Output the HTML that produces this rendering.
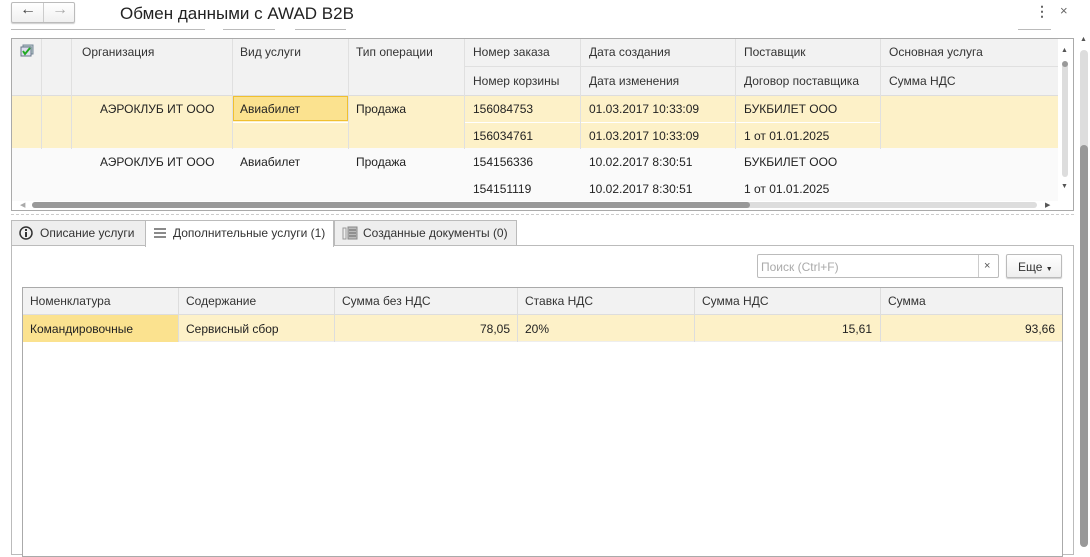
<!DOCTYPE html>
<html><head><meta charset="utf-8"><style>
*{box-sizing:border-box;margin:0;padding:0}
body{width:1090px;height:547px;background:#fff;font-family:"Liberation Sans",Arial,sans-serif;font-size:12px;color:#333;position:relative;overflow:hidden}
.a{position:absolute}
.t{position:absolute;white-space:nowrap;line-height:14px}
.hc{background:#f2f2f2}
</style></head><body>
<!-- nav buttons -->
<div class="a" style="left:11px;top:2px;width:64px;height:21px;border:1px solid #bbb;border-radius:2px;background:linear-gradient(#fff,#f0f0f0);box-shadow:0 1px 1px #ccc"></div>
<div class="a" style="left:43px;top:3px;width:1px;height:19px;background:#ccc"></div>
<div class="t" style="left:20px;top:3px;font-size:16px;color:#444">&#8592;</div>
<div class="t" style="left:52px;top:3px;font-size:16px;color:#aaa">&#8594;</div>
<div class="t" style="left:120px;top:4px;font-size:17px;line-height:20px;color:#222">Обмен данными с AWAD B2B</div>
<div class="a" style="left:11px;top:29px;width:194px;height:1px;background:#bbb"></div>
<div class="a" style="left:223px;top:29px;width:52px;height:1px;background:#bbb"></div>
<div class="a" style="left:295px;top:29px;width:51px;height:1px;background:#bbb"></div>
<div class="a" style="left:1018px;top:29px;width:33px;height:1px;background:#bbb"></div>
<div class="t" style="left:1035px;top:4px;font-size:14px;color:#666;font-weight:bold">&#8942;</div>
<div class="t" style="left:1060px;top:4px;font-size:13px;color:#666">×</div>

<!-- top table -->
<div class="a" style="left:11px;top:38px;width:1063px;height:173px;border:1px solid #aaa;background:#fff"></div>
<div class="a hc" style="left:12px;top:39px;width:1046px;height:56px"></div>
<div class="a" style="left:12px;top:95px;width:1046px;height:53px;background:#fdf1c8"></div>
<div class="a" style="left:12px;top:148px;width:1046px;height:53px;background:#fafafa"></div>
<div class="a" style="left:233px;top:96px;width:115px;height:25px;background:#fbe28f;border:1px solid #f0c030"></div>
<!-- horizontal sub-lines -->
<div class="a" style="left:464px;top:66px;width:594px;height:1px;background:#e0e0e0"></div>
<div class="a" style="left:464px;top:122px;width:416px;height:1px;background:#fff"></div>
<div class="a" style="left:233px;top:122px;width:115px;height:1px;background:#fff"></div>
<div class="a" style="left:12px;top:95px;width:1046px;height:1px;background:#ddd"></div>
<!-- vertical lines -->
<div class="a" style="left:41px;top:39px;width:1px;height:110px;background:#fff;border-left:1px solid #e0e0e0"></div>
<div class="a" style="left:71px;top:39px;width:1px;height:110px;background:#e0e0e0"></div>
<div class="a" style="left:232px;top:39px;width:1px;height:110px;background:#e0e0e0"></div>
<div class="a" style="left:348px;top:39px;width:1px;height:110px;background:#e0e0e0"></div>
<div class="a" style="left:464px;top:39px;width:1px;height:110px;background:#e0e0e0"></div>
<div class="a" style="left:580px;top:39px;width:1px;height:110px;background:#e0e0e0"></div>
<div class="a" style="left:735px;top:39px;width:1px;height:110px;background:#e0e0e0"></div>
<div class="a" style="left:880px;top:39px;width:1px;height:110px;background:#e0e0e0"></div>
<!-- check icon -->
<svg class="a" style="left:20px;top:44px" width="14" height="13"><rect x="3" y="1" width="10" height="9" fill="#bcc" stroke="#789"/><rect x="1" y="3" width="10" height="9" fill="#dde" stroke="#678"/><path d="M3 7l2 3 5-6" stroke="#2a2" stroke-width="2" fill="none"/></svg>
<div class="t" style="left:82px;top:45px">Организация</div>
<div class="t" style="left:240px;top:45px">Вид услуги</div>
<div class="t" style="left:356px;top:45px">Тип операции</div>
<div class="t" style="left:473px;top:45px">Номер заказа</div>
<div class="t" style="left:589px;top:45px">Дата создания</div>
<div class="t" style="left:744px;top:45px">Поставщик</div>
<div class="t" style="left:889px;top:45px">Основная услуга</div>
<div class="t" style="left:473px;top:74px">Номер корзины</div>
<div class="t" style="left:589px;top:74px">Дата изменения</div>
<div class="t" style="left:744px;top:74px">Договор поставщика</div>
<div class="t" style="left:889px;top:74px">Сумма НДС</div>
<div class="t" style="left:100px;top:102px;color:#222">АЭРОКЛУБ ИТ ООО</div>
<div class="t" style="left:240px;top:102px;color:#222">Авиабилет</div>
<div class="t" style="left:356px;top:102px;color:#222">Продажа</div>
<div class="t" style="left:473px;top:102px;color:#222">156084753</div>
<div class="t" style="left:589px;top:102px;color:#222">01.03.2017 10:33:09</div>
<div class="t" style="left:744px;top:102px;color:#222">БУКБИЛЕТ ООО</div>
<div class="t" style="left:473px;top:129px;color:#222">156034761</div>
<div class="t" style="left:589px;top:129px;color:#222">01.03.2017 10:33:09</div>
<div class="t" style="left:744px;top:129px;color:#222">1 от 01.01.2025</div>
<div class="t" style="left:100px;top:155px;color:#222">АЭРОКЛУБ ИТ ООО</div>
<div class="t" style="left:240px;top:155px;color:#222">Авиабилет</div>
<div class="t" style="left:356px;top:155px;color:#222">Продажа</div>
<div class="t" style="left:473px;top:155px;color:#222">154156336</div>
<div class="t" style="left:589px;top:155px;color:#222">10.02.2017 8:30:51</div>
<div class="t" style="left:744px;top:155px;color:#222">БУКБИЛЕТ ООО</div>
<div class="t" style="left:473px;top:182px;color:#222">154151119</div>
<div class="t" style="left:589px;top:182px;color:#222">10.02.2017 8:30:51</div>
<div class="t" style="left:744px;top:182px;color:#222">1 от 01.01.2025</div>
<!-- table scrollbars -->
<div class="a" style="left:1062px;top:62px;width:6px;height:115px;background:#ddd;border-radius:3px"></div>
<div class="a" style="left:1062px;top:61px;width:6px;height:6px;background:#999;border-radius:3px"></div>
<div class="t" style="left:1061px;top:44px;font-size:7px;color:#555">▲</div>
<div class="t" style="left:1061px;top:180px;font-size:7px;color:#555">▼</div>
<div class="a" style="left:32px;top:202px;width:1005px;height:6px;background:#ddd;border-radius:3px"></div>
<div class="a" style="left:32px;top:202px;width:718px;height:6px;background:#999;border-radius:3px"></div>
<div class="t" style="left:20px;top:199px;font-size:7px;color:#aaa">◀</div>
<div class="t" style="left:1045px;top:199px;font-size:7px;color:#555">▶</div>
<div class="a" style="left:11px;top:214px;width:1063px;border-top:1px dashed #ccc"></div>

<!-- tabs -->
<div class="a" style="left:11px;top:245px;width:1063px;height:310px;border:1px solid #bbb;background:#fff"></div>
<div class="a" style="left:11px;top:220px;width:135px;height:26px;border:1px solid #bbb;background:#eee"></div>
<div class="a" style="left:145px;top:220px;width:189px;height:27px;border:1px solid #bbb;border-bottom:none;background:#fff"></div>
<div class="a" style="left:334px;top:220px;width:183px;height:26px;border:1px solid #bbb;background:#eee"></div>
<svg class="a" style="left:19px;top:226px" width="14" height="14"><circle cx="7" cy="7" r="6" fill="none" stroke="#333" stroke-width="1.5"/><rect x="6" y="6" width="2" height="5" fill="#333"/><rect x="6" y="3" width="2" height="2" fill="#333"/></svg>
<div class="t" style="left:40px;top:226px;color:#333">Описание услуги</div>
<svg class="a" style="left:153px;top:227px" width="14" height="12"><path d="M1 2h12M1 6h12M1 10h12" stroke="#444" stroke-width="1.2"/></svg>
<div class="t" style="left:173px;top:226px;color:#333">Дополнительные услуги (1)</div>
<svg class="a" style="left:342px;top:226px" width="16" height="14"><rect x="1" y="2" width="3" height="11" fill="none" stroke="#999"/><rect x="6" y="1" width="9" height="12" fill="#bbb" stroke="#888"/><path d="M7 4h7M7 7h7M7 10h7" stroke="#666"/></svg>
<div class="t" style="left:363px;top:226px;color:#333">Созданные документы (0)</div>

<!-- search -->
<div class="a" style="left:757px;top:254px;width:242px;height:24px;border:1px solid #bbb;border-radius:2px;background:#fff"></div>
<div class="a" style="left:978px;top:255px;width:1px;height:22px;background:#ccc"></div>
<div class="t" style="left:761px;top:260px;color:#aaa">Поиск (Ctrl+F)</div>
<div class="t" style="left:984px;top:259px;font-size:11px;color:#555">×</div>
<div class="a" style="left:1006px;top:254px;width:56px;height:24px;border:1px solid #bbb;border-radius:2px;background:linear-gradient(#fff,#eee);box-shadow:0 1px 1px #ccc"></div>
<div class="t" style="left:1018px;top:260px;color:#333">Еще <span style="font-size:7px">▼</span></div>

<!-- bottom table -->
<div class="a" style="left:22px;top:287px;width:1041px;height:270px;border:1px solid #aaa;background:#fff"></div>
<div class="a hc" style="left:23px;top:288px;width:1039px;height:27px;border-bottom:1px solid #ddd"></div>
<div class="a" style="left:23px;top:315px;width:1039px;height:27px;background:#fdf1c8;border-bottom:1px solid #eee"></div>
<div class="a" style="left:23px;top:315px;width:155px;height:27px;background:#fbe28f"></div>
<div class="a" style="left:178px;top:288px;width:1px;height:54px;background:#ddd"></div>
<div class="a" style="left:334px;top:288px;width:1px;height:54px;background:#ddd"></div>
<div class="a" style="left:517px;top:288px;width:1px;height:54px;background:#ddd"></div>
<div class="a" style="left:694px;top:288px;width:1px;height:54px;background:#ddd"></div>
<div class="a" style="left:880px;top:288px;width:1px;height:54px;background:#ddd"></div>
<div class="t" style="left:30px;top:294px">Номенклатура</div>
<div class="t" style="left:186px;top:294px">Содержание</div>
<div class="t" style="left:342px;top:294px">Сумма без НДС</div>
<div class="t" style="left:525px;top:294px">Ставка НДС</div>
<div class="t" style="left:702px;top:294px">Сумма НДС</div>
<div class="t" style="left:888px;top:294px">Сумма</div>
<div class="t" style="left:30px;top:322px;color:#222">Командировочные</div>
<div class="t" style="left:186px;top:322px;color:#222">Сервисный сбор</div>
<div class="t" style="left:450px;top:322px;width:60px;text-align:right;color:#222">78,05</div>
<div class="t" style="left:525px;top:322px;color:#222">20%</div>
<div class="t" style="left:800px;top:322px;width:72px;text-align:right;color:#222">15,61</div>
<div class="t" style="left:985px;top:322px;width:70px;text-align:right;color:#222">93,66</div>

<!-- page scrollbar -->
<div class="t" style="left:1080px;top:33px;font-size:7px;color:#555">▲</div>
<div class="a" style="left:1080px;top:50px;width:8px;height:497px;background:#ddd;border-radius:4px"></div>
<div class="a" style="left:1080px;top:145px;width:8px;height:402px;background:#999;border-radius:4px"></div>
</body></html>
